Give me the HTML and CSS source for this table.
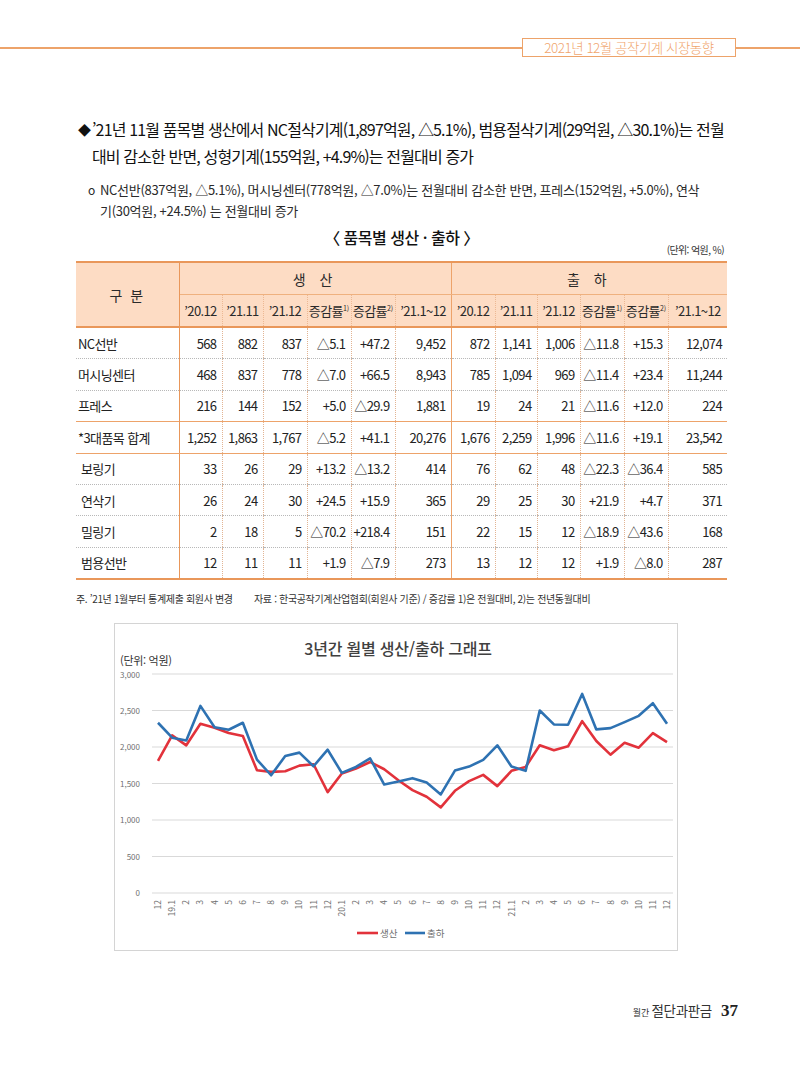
FILE: index.html
```html
<!DOCTYPE html>
<html lang="ko">
<head>
<meta charset="utf-8">
<title>2021년 12월 공작기계 시장동향</title>
<link rel="stylesheet" href="styles.css">
</head>
<body>
<header class="topbar">
  <span class="rule"></span>
  <span class="tag">2021년 12월 공작기계 시장동향</span>
  <span class="rule end"></span>
</header>
<main class="content">
  <div class="lead">
    <span class="mark">◆</span>
    <p>’21년 11월 품목별 생산에서 NC절삭기계(1,897억원, △5.1%), 범용절삭기계(29억원, △30.1%)는 전월<br>대비 감소한 반면, 성형기계(155억원, +4.9%)는 전월대비 증가</p>
  </div>
  <div class="sub">
    <span class="mark">o</span>
    <p>NC선반(837억원, △5.1%), 머시닝센터(778억원, △7.0%)는 전월대비 감소한 반면, 프레스(152억원, +5.0%), 연삭<br>기(30억원, +24.5%) 는 전월대비 증가</p>
  </div>
  <h2 class="tbl-title">〈 품목별 생산 · 출하 〉</h2>
  <div class="unit">(단위: 억원, %)</div>
  <table class="data">
    <colgroup>
      <col style="width:103px"><col style="width:43px"><col style="width:41px"><col style="width:44px"><col style="width:44px"><col style="width:44px"><col style="width:56px">
      <col style="width:44px"><col style="width:42px"><col style="width:43px"><col style="width:44px"><col style="width:44px"><col style="width:59px">
    </colgroup>
    <thead>
      <tr class="r1">
        <th rowspan="2" class="gubun">구 분</th>
        <th colspan="6" class="grp">생 산</th>
        <th colspan="6" class="grp div">출 하</th>
      </tr>
      <tr class="r2">
        <th class="c1">’20.12</th><th>’21.11</th><th>’21.12</th><th>증감률<sup>1)</sup></th><th>증감률<sup>2)</sup></th><th>’21.1~12</th>
        <th class="div">’20.12</th><th>’21.11</th><th>’21.12</th><th>증감률<sup>1)</sup></th><th>증감률<sup>2)</sup></th><th>’21.1~12</th>
      </tr>
    </thead>
    <tbody>
      <tr><td class="name">NC선반</td><td>568</td><td>882</td><td>837</td><td>△5.1</td><td>+47.2</td><td>9,452</td><td class="div">872</td><td>1,141</td><td>1,006</td><td>△11.8</td><td>+15.3</td><td>12,074</td></tr>
      <tr><td class="name">머시닝센터</td><td>468</td><td>837</td><td>778</td><td>△7.0</td><td>+66.5</td><td>8,943</td><td class="div">785</td><td>1,094</td><td>969</td><td>△11.4</td><td>+23.4</td><td>11,244</td></tr>
      <tr><td class="name">프레스</td><td>216</td><td>144</td><td>152</td><td>+5.0</td><td>△29.9</td><td>1,881</td><td class="div">19</td><td>24</td><td>21</td><td>△11.6</td><td>+12.0</td><td>224</td></tr>
      <tr class="total"><td class="name">*3대품목 합계</td><td>1,252</td><td>1,863</td><td>1,767</td><td>△5.2</td><td>+41.1</td><td>20,276</td><td class="div">1,676</td><td>2,259</td><td>1,996</td><td>△11.6</td><td>+19.1</td><td>23,542</td></tr>
      <tr><td class="name sub-item">보링기</td><td>33</td><td>26</td><td>29</td><td>+13.2</td><td>△13.2</td><td>414</td><td class="div">76</td><td>62</td><td>48</td><td>△22.3</td><td>△36.4</td><td>585</td></tr>
      <tr><td class="name sub-item">연삭기</td><td>26</td><td>24</td><td>30</td><td>+24.5</td><td>+15.9</td><td>365</td><td class="div">29</td><td>25</td><td>30</td><td>+21.9</td><td>+4.7</td><td>371</td></tr>
      <tr><td class="name sub-item">밀링기</td><td>2</td><td>18</td><td>5</td><td>△70.2</td><td>+218.4</td><td>151</td><td class="div">22</td><td>15</td><td>12</td><td>△18.9</td><td>△43.6</td><td>168</td></tr>
      <tr class="last"><td class="name sub-item">범용선반</td><td>12</td><td>11</td><td>11</td><td>+1.9</td><td>△7.9</td><td>273</td><td class="div">13</td><td>12</td><td>12</td><td>+1.9</td><td>△8.0</td><td>287</td></tr>
    </tbody>
  </table>
  <p class="notes"><span class="n1">주. ’21년 1월부터 통계제출 회원사 변경</span><span class="n2">자료 : 한국공작기계산업협회(회원사 기준) / 증감률 1)은 전월대비, 2)는 전년동월대비</span></p>

  <div class="chart">
    <svg width="562" height="326" viewBox="0 0 562 326" xmlns="http://www.w3.org/2000/svg">
      <text class="c-title" x="283" y="31" text-anchor="middle">3년간 월별 생산/출하 그래프</text>
      <text class="c-unit" x="5" y="40.5">(단위: 억원)</text>
      <g class="grid">
        <line x1="37" y1="50" x2="558" y2="50"/>
        <line x1="37" y1="86.5" x2="558" y2="86.5"/>
        <line x1="37" y1="123" x2="558" y2="123"/>
        <line x1="37" y1="159.5" x2="558" y2="159.5"/>
        <line x1="37" y1="196" x2="558" y2="196"/>
        <line x1="37" y1="232.5" x2="558" y2="232.5"/>
        <line x1="37" y1="269" x2="558" y2="269"/>
      </g>
      <g class="ylab" text-anchor="end">
        <text x="25" y="54">3,000</text>
        <text x="25" y="89.5">2,500</text>
        <text x="25" y="126">2,000</text>
        <text x="25" y="162.5">1,500</text>
        <text x="25" y="199">1,000</text>
        <text x="25" y="235.5">500</text>
        <text x="25" y="272">0</text>
      </g>
      <g transform="translate(43 269) scale(14.139 -0.073)">
        <polyline class="ln red" vector-effect="non-scaling-stroke" points="0,1809 1,2159 2,2023 3,2318 4,2264 5,2191 6,2150 7,1682 8,1659 9,1668 10,1745 11,1764 12,1382 13,1636 14,1705 15,1795 16,1695 17,1545 18,1409 19,1318 20,1173 21,1400 22,1532 23,1618 24,1464 25,1673 26,1727 27,2023 28,1955 29,2009 30,2354 31,2082 32,1895 33,2059 34,1991 35,2191 36,2068"/>
        <polyline class="ln blue" vector-effect="non-scaling-stroke" points="0,2332 1,2127 2,2090 3,2563 4,2270 5,2236 6,2332 7,1827 8,1613 9,1877 10,1923 11,1736 12,1963 13,1645 14,1727 15,1845 16,1486 17,1527 18,1573 19,1514 20,1350 21,1677 22,1732 23,1823 24,2023 25,1732 26,1673 27,2500 28,2309 29,2304 30,2727 31,2241 32,2259 33,2341 34,2427 35,2600 36,2318"/>
      </g>
      <g class="xlab" text-anchor="end">
        <text transform="translate(46 276) rotate(-90)">12</text>
        <text transform="translate(60.1 276) rotate(-90)">19.1</text>
        <text transform="translate(74.3 276) rotate(-90)">2</text>
        <text transform="translate(88.4 276) rotate(-90)">3</text>
        <text transform="translate(102.6 276) rotate(-90)">4</text>
        <text transform="translate(116.7 276) rotate(-90)">5</text>
        <text transform="translate(130.8 276) rotate(-90)">6</text>
        <text transform="translate(145 276) rotate(-90)">7</text>
        <text transform="translate(159.1 276) rotate(-90)">8</text>
        <text transform="translate(173.3 276) rotate(-90)">9</text>
        <text transform="translate(187.4 276) rotate(-90)">10</text>
        <text transform="translate(201.5 276) rotate(-90)">11</text>
        <text transform="translate(215.7 276) rotate(-90)">12</text>
        <text transform="translate(229.8 276) rotate(-90)">20.1</text>
        <text transform="translate(244 276) rotate(-90)">2</text>
        <text transform="translate(258.1 276) rotate(-90)">3</text>
        <text transform="translate(272.2 276) rotate(-90)">4</text>
        <text transform="translate(286.4 276) rotate(-90)">5</text>
        <text transform="translate(300.5 276) rotate(-90)">6</text>
        <text transform="translate(314.6 276) rotate(-90)">7</text>
        <text transform="translate(328.8 276) rotate(-90)">8</text>
        <text transform="translate(342.9 276) rotate(-90)">9</text>
        <text transform="translate(357.1 276) rotate(-90)">10</text>
        <text transform="translate(371.2 276) rotate(-90)">11</text>
        <text transform="translate(385.3 276) rotate(-90)">12</text>
        <text transform="translate(399.5 276) rotate(-90)">21.1</text>
        <text transform="translate(413.6 276) rotate(-90)">2</text>
        <text transform="translate(427.8 276) rotate(-90)">3</text>
        <text transform="translate(441.9 276) rotate(-90)">4</text>
        <text transform="translate(456 276) rotate(-90)">5</text>
        <text transform="translate(470.2 276) rotate(-90)">6</text>
        <text transform="translate(484.3 276) rotate(-90)">7</text>
        <text transform="translate(498.5 276) rotate(-90)">8</text>
        <text transform="translate(512.6 276) rotate(-90)">9</text>
        <text transform="translate(526.7 276) rotate(-90)">10</text>
        <text transform="translate(540.9 276) rotate(-90)">11</text>
        <text transform="translate(555 276) rotate(-90)">12</text>
      </g>
      <g class="legend">
        <line class="red" x1="242" y1="309" x2="263" y2="309"/>
        <text x="265" y="312.5">생산</text>
        <line class="blue" x1="290" y1="309" x2="310" y2="309"/>
        <text x="312" y="312.5">출하</text>
      </g>
    </svg>
  </div>
</main>
<footer class="folio"><span class="m">월간</span><span class="t">절단과판금</span><b>37</b></footer>
</body>
</html>
```

FILE: styles.css
```css
html, body {
  margin: 0;
  padding: 0;
  background: #ffffff;
}
body {
  width: 800px;
  height: 1067px;
  font-family: "Noto Sans CJK KR", "Noto Sans", sans-serif;
  color: #1e1e1e;
}

/* header strip */
.topbar {
  display: flex;
  align-items: center;
  padding-top: 38px;
  height: 19px;
}
.topbar .rule {
  flex: 1;
  height: 2px;
  background: #eda36a;
}
.topbar .rule.end {
  flex: 0 0 64px;
}
.topbar .tag {
  flex: 0 0 214px;
  height: 19px;
  box-sizing: border-box;
  border: 1px solid #eda36a;
  background: #fff;
  color: #f0a56c;
  font-size: 13.5px;
  line-height: 17px;
  letter-spacing: -0.5px;
  text-align: center;
  font-weight: 300;
}

.content {
  padding: 0 73px 0 76px;
}

/* lead bullet */
.lead {
  display: flex;
  margin-top: 59px;
  padding-left: 2px;
  font-size: 16px;
  line-height: 27px;
  letter-spacing: -0.85px;
  color: #111;
}
.lead .mark {
  flex: 0 0 14px;
  font-size: 13px;
  letter-spacing: 0;
}
.lead p, .sub p {
  margin: 0;
}
.sub {
  display: flex;
  margin-top: 9px;
  padding-left: 12px;
  font-size: 13px;
  line-height: 21px;
  letter-spacing: -0.3px;
  color: #2a2a2a;
}
.sub .mark {
  flex: 0 0 12px;
  font-size: 12px;
  letter-spacing: 0;
}

.tbl-title {
  margin: 8px 0 0;
  text-align: center;
  font-size: 16px;
  line-height: 16px;
  font-weight: 500;
  letter-spacing: -0.5px;
  color: #111;
}
.unit {
  margin-top: -1px;
  text-align: right;
  font-size: 10px;
  line-height: 12px;
  letter-spacing: -0.6px;
  color: #333;
  padding-right: 3px;
}

/* table */
.data {
  margin-top: 5px;
  width: 651px;
  table-layout: fixed;
  border-collapse: collapse;
  font-size: 13px;
  letter-spacing: -0.6px;
  color: #222;
}
.data th {
  background: #fddcc4;
  font-weight: 400;
  padding: 0;
  text-align: center;
  color: #2a2a2a;
}
.data .r1 th {
  height: 31px;
  border-top: 2px solid #e9975a;
  border-bottom: 1px solid #efb17f;
  font-size: 14px;
  letter-spacing: 5px;
}
.data .r1 th.gubun {
  letter-spacing: 2px;
  border-right: 1px solid #e9975a;
  border-bottom: 2px solid #e9975a;
}
.data .r2 th {
  height: 31px;
  border-bottom: 2px solid #e9975a;
  border-left: 1px dotted #ecb893;
}
.data .r2 th.c1 {
  border-left: 1px solid #e9975a;
}
.data th.div {
  border-left: 1px solid #eda36a;
}
.data sup {
  font-size: 7px;
  letter-spacing: 0;
  vertical-align: 5px;
  line-height: 0;
}
.data td {
  height: 30.4px;
  padding: 0 5px 0 0;
  text-align: right;
  border-bottom: 1px dotted #b8b8b8;
  border-left: 1px dotted #e2b493;
  white-space: nowrap;
}
.data td.name {
  text-align: left;
  padding: 0 0 0 2px;
  border-left: none;
  border-right: 1px solid #e9975a;
}
.data td.name.sub-item {
  padding-left: 5px;
}
.data td.div {
  border-left: 1px solid #eda36a;
}
.data tr.total td {
  border-top: 1px solid #eda36a;
  border-bottom: 1px solid #eda36a;
}
.data tr.last td {
  border-bottom: 2px solid #e9975a;
}

.notes {
  margin: 12px 0 0;
  font-size: 10px;
  line-height: 14px;
  letter-spacing: -0.35px;
  color: #333;
  display: flex;
}
.notes .n1 {
  flex: 0 0 178px;
}

/* chart */
.chart {
  margin: 17px 0 0 38px;
  width: 564px;
  height: 328px;
  box-sizing: border-box;
  border: 1px solid #d4d4d4;
  background: #fff;
}
.chart svg {
  display: block;
  font-family: "Noto Sans CJK KR", "Noto Sans", sans-serif;
}
.c-title {
  font-size: 16px;
  font-weight: 500;
  fill: #404040;
  letter-spacing: -0.2px;
}
.c-unit {
  font-size: 11px;
  fill: #333;
  letter-spacing: -0.3px;
}
.grid line {
  stroke: #d9d9d9;
  stroke-width: 1;
}
.ylab text {
  font-size: 8px;
  fill: #6f6f6f;
}
.xlab text {
  font-size: 8.5px;
  fill: #6f6f6f;
}
.ln {
  fill: none;
  stroke-width: 2.6;
  stroke-linejoin: round;
}
.ln.red, .legend line.red {
  stroke: #e2323b;
}
.ln.blue, .legend line.blue {
  stroke: #2e72b2;
}
.legend line {
  stroke-width: 2.6;
}
.legend text {
  font-size: 9.5px;
  fill: #6f6f6f;
}

/* folio */
.folio {
  margin-top: 49px;
  padding-right: 62px;
  display: flex;
  justify-content: flex-end;
  align-items: baseline;
  line-height: 20px;
  color: #333;
}
.folio .m {
  font-size: 9px;
  margin-right: 2px;
}
.folio .t {
  font-size: 13.5px;
  letter-spacing: -0.3px;
}
.folio b {
  margin-left: 9px;
  font-family: "Liberation Serif", "DejaVu Serif", serif;
  font-size: 17px;
  color: #222;
}
```
